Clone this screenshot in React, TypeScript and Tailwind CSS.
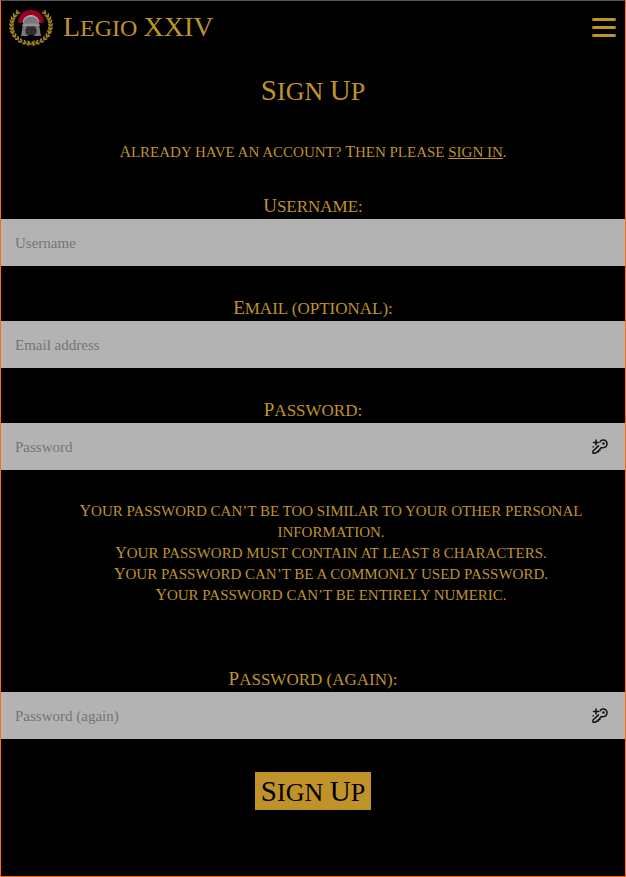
import { Fragment, useState } from "react";

type Size = "brand" | "title" | "body" | "label";

const capSize: Record<Size, string> = {
  brand: "text-[28px]",
  title: "text-[29px]",
  body: "text-[16px]",
  label: "text-[19px]",
};
const baseSize: Record<Size, string> = {
  brand: "text-[24px]",
  title: "text-[26px]",
  body: "text-[15px]",
  label: "text-[17px]",
};

/** Roman inscription lettering: small capitals with slightly taller initials. */
function Inscription({ text, size }: { text: string; size: Size }) {
  return (
    <span className={`uppercase ${baseSize[size]} leading-none`}>
      {text.split(/([A-Z]+)/).map((part, i) =>
        /^[A-Z]+$/.test(part) ? (
          <span key={i} className={`${capSize[size]} leading-none`}>{part}</span>
        ) : (
          <Fragment key={i}>{part}</Fragment>
        ),
      )}
    </span>
  );
}

// Leaf positions on the left branch: x, y, angle
const leaves = [
  [9, 4, 38], [6, 7, 28], [4, 10, 18], [3, 13, 10], [2.5, 16.5, 2], [2.7, 20, -6],
  [3.5, 23.5, -16], [5.2, 27, -28], [7.8, 30, -42], [11, 32.5, -56], [15, 34.3, -70], [19, 35, -82],
];

function Branch() {
  return (
    <g fill="#a5842b">
      <path d="M10 3C4 8 2 14 3 21C4 30 12 36 20 35L25 38" fill="none" stroke="#8f7024" strokeWidth="0.8" />
      {leaves.map(([x, y, a]) => (
        <g key={y} transform={`translate(${x} ${y}) rotate(${a})`}>
          <ellipse cx="-1.3" cy="0" rx="0.9" ry="2.1" transform="rotate(-32)" />
          <ellipse cx="1.3" cy="0" rx="0.9" ry="2.1" transform="rotate(32)" />
        </g>
      ))}
    </g>
  );
}

function Logo() {
  return (
    <svg viewBox="0 0 44 39" className="h-[39px] w-11" aria-hidden="true">
      <Branch />
      <g transform="translate(44 0) scale(-1 1)"><Branch /></g>
      <path d="M9 14.500C10 6 15 2 22 2S34 6 35 14.500L30.500 15C29 10.500 26 8 22 8S15 10.500 13.500 15Z" fill="#a00020" />
      <path d="M13.500 14C15 9 18 7 22 7S29 9 30.500 14L29 15C27.500 11 25 9 22 9S16.500 11 15 15Z" fill="#aaa4ab" />
      <path d="M14 17C14 11.500 18 9 22 9S30 11.500 30 17L31 22L32 28H12L13 22Z" fill="#77777c" />
      <path d="M14 15.500H30L31 18H13Z" fill="#929296" />
      <path d="M18 18.500H26L27.500 21V25L25.500 27.500L24 26.500H20L18.500 27.500L16.500 25V21Z" fill="#2c2c2f" />
      <path d="M19 28L20 26.500H24L25 28Z" fill="#000" />
    </svg>
  );
}

function KeyIcon() {
  return (
    <svg viewBox="0 0 16 16" className="h-4 w-4" fill="none" stroke="#111" strokeWidth="1.5" strokeLinejoin="round" strokeLinecap="round" aria-hidden="true">
      <path d="M8 3C9 .8 12 .2 14 2C15.700 3.800 15.200 7 13 8.200C11.700 9 10.400 9 9.300 8.600L7.800 10.200V11.500H6.300V13H4.700L3.500 14.300H1V12L6.500 6.900" />
      <path d="M4 1V6M1.500 3.500H6.500M1.200 7.800V8" />
      <circle cx="11.500" cy="4.500" r="1.200" fill="#111" stroke="none" />
    </svg>
  );
}

interface FieldProps {
  id: string;
  label: string;
  placeholder: string;
  type: string;
}

function Field({ id, label, placeholder, type }: FieldProps) {
  return (
    <div>
      <label htmlFor={id} className="block h-[26px] text-center text-[19px] leading-[26px]">
        <Inscription text={label} size="label" />
      </label>
      <div className="flex h-[47px] items-center bg-[#b3b3b3] pr-[17px]">
        <input
          id={id}
          type={type}
          placeholder={placeholder}
          className="h-full min-w-0 flex-1 bg-transparent px-[14px] pt-[2px] text-[15px] text-black outline-none placeholder:text-[#757575]"
        />
        {type === "password" && <KeyIcon />}
      </div>
    </div>
  );
}

const rules = [
  "Your password can’t be too similar to your other personal information.",
  "Your password must contain at least 8 characters.",
  "Your password can’t be a commonly used password.",
  "Your password can’t be entirely numeric.",
];

export default function App() {
  const [open, setOpen] = useState(false);
  return (
    <div className="min-h-screen border border-[#ff6a13] border-t-[#555] bg-black font-['Liberation_Serif',serif] text-[#bf932a]">
      <header className="flex h-[52px] items-center justify-between pr-[9px] pl-2">
        <a href="#" className="flex items-center gap-[10px] leading-[38px]">
          <Logo />
          <Inscription text="Legio XXIV" size="brand" />
        </a>
        <button type="button" aria-label="Menu" aria-expanded={open} onClick={() => setOpen(!open)} className="flex w-6 flex-col gap-[5px]">
          <span className="h-[3px] rounded-xs bg-[#bf932a]" />
          <span className="h-[3px] rounded-xs bg-[#bf932a]" />
          <span className="h-[3px] rounded-xs bg-[#bf932a]" />
        </button>
      </header>
      <main className="pt-[18px] text-center">
        <h1 className="h-[38px] text-[29px] leading-[38px]"><Inscription text="Sign Up" size="title" /></h1>
        <p className="mt-[33px] h-[21px] text-[15px] leading-[21px]">
          <Inscription text="Already have an account? Then please " size="body" />
          <a href="#signin" className="underline"><Inscription text="sign in" size="body" /></a>
          <Inscription text="." size="body" />
        </p>
        <form className="mt-[30px]" onSubmit={(e) => e.preventDefault()}>
          <div className="flex flex-col gap-[29px]">
            <Field id="username" label="Username:" placeholder="Username" type="text" />
            <Field id="email" label="Email (optional):" placeholder="Email address" type="email" />
            <Field id="password" label="Password:" placeholder="Password" type="password" />
          </div>
          <ul className="mt-[30px] mb-[61px] pr-[34px] pl-[70px] leading-[21px]">
            {rules.map((rule) => (
              <li key={rule}><Inscription text={rule} size="body" /></li>
            ))}
          </ul>
          <Field id="password2" label="Password (again):" placeholder="Password (again)" type="password" />
          <button type="submit" className="mt-[33px] h-[38px] bg-[#bf932a] px-[6px] text-[29px] leading-[38px] text-black">
            <Inscription text="Sign Up" size="title" />
          </button>
        </form>
      </main>
    </div>
  );
}
